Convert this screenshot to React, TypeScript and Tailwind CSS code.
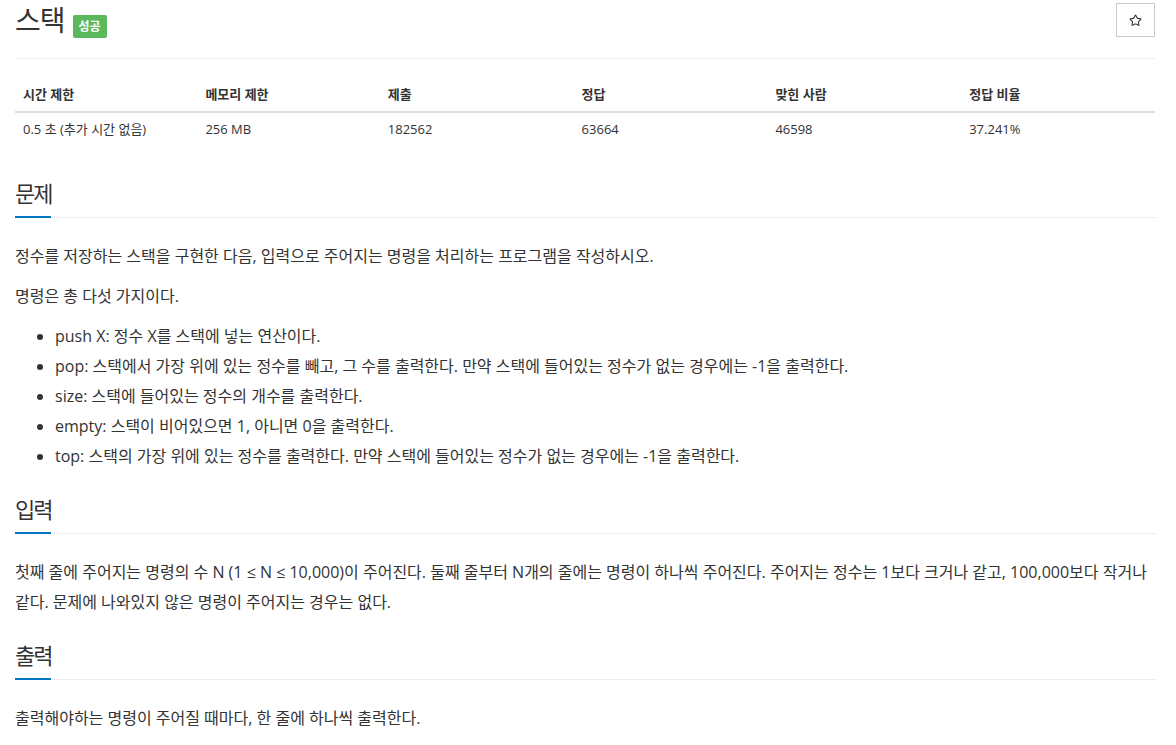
import { Star } from 'lucide-react';

const stats = [
  { label: '시간 제한', value: '0.5 초 (추가 시간 없음)', width: 'w-[16%]' },
  { label: '메모리 제한', value: '256 MB', width: 'w-[16%]' },
  { label: '제출', value: '182562', width: 'w-[17%]' },
  { label: '정답', value: '63664', width: 'w-[17%]' },
  { label: '맞힌 사람', value: '46598', width: 'w-[17%]' },
  { label: '정답 비율', value: '37.241%', width: 'w-[17%]' }
];

const commands = [
  'push X: 정수 X를 스택에 넣는 연산이다.',
  'pop: 스택에서 가장 위에 있는 정수를 빼고, 그 수를 출력한다. 만약 스택에 들어있는 정수가 없는 경우에는 -1을 출력한다.',
  'size: 스택에 들어있는 정수의 개수를 출력한다.',
  'empty: 스택이 비어있으면 1, 아니면 0을 출력한다.',
  'top: 스택의 가장 위에 있는 정수를 출력한다. 만약 스택에 들어있는 정수가 없는 경우에는 -1을 출력한다.'
];

function Headline({ title }: { title: string }) {
  return (
    <div className="mt-[26px] border-b border-dotted border-[#dddddd]">
      <h2 className="inline-block -mb-px border-b-2 border-[#0076c0] pb-[11px] text-[22px] font-normal leading-[24px] tracking-[-2px] text-[#333333]">
        {title}
      </h2>
    </div>
  );
}

export default function App() {
  return (
    <div className="min-h-screen bg-white font-['Open_Sans','Noto_Sans_CJK_KR',sans-serif] text-[#333333]">
      <div className="max-w-[1170px] px-[15px]">
        {/* Title */}
        <div className="mt-[3px] flex items-start justify-between">
          <div className="flex items-start">
            <h1 className="text-[28px] font-normal leading-[34px] tracking-[-1px] text-[#333333]">스택</h1>
            <span className="ml-[8px] mt-[12px] flex h-[23px] items-center rounded-[2px] bg-[#5cb85c] px-[6px] text-[12px] font-bold text-white">
              성공
            </span>
          </div>
          <button className="flex h-[34px] w-[39px] items-center justify-center border border-[#cccccc] bg-white">
            <Star className="h-[13px] w-[13px] text-[#333333]" strokeWidth={2} />
          </button>
        </div>
        <hr className="mt-[20px] border-0 border-t border-[#eeeeee]" />

        {/* Stats table */}
        <table className="mt-[17px] w-full border-collapse text-[13px]">
          <thead>
            <tr>
              {stats.map((s) => (
                <th
                  key={s.label}
                  className={`${s.width} border-b-2 border-[#dddddd] px-[8px] pt-[8px] pb-[7px] text-left font-bold leading-[20px]`}
                >
                  {s.label}
                </th>
              ))}
            </tr>
          </thead>
          <tbody>
            <tr>
              {stats.map((s) => (
                <td key={s.label} className="px-[8px] pt-[6px] pb-[8px] leading-[20px]">
                  {s.value}
                </td>
              ))}
            </tr>
          </tbody>
        </table>

        {/* 문제 */}
        <div className="mt-[34px]">
          <Headline title="문제" />
          <div className="mt-[23px] text-[16px] leading-[30px]">
            <p className="mb-[10px]">
              정수를 저장하는 스택을 구현한 다음, 입력으로 주어지는 명령을 처리하는 프로그램을 작성하시오.
            </p>
            <p className="mb-[10px]">명령은 총 다섯 가지이다.</p>
            <ul className="mb-[10px] list-disc pl-[40px]">
              {commands.map((c) => (
                <li key={c}>{c}</li>
              ))}
            </ul>
          </div>
        </div>

        {/* 입력 */}
        <Headline title="입력" />
        <div className="mt-[23px] text-[16px] leading-[30px]">
          <p className="mb-[10px]">
            첫째 줄에 주어지는 명령의 수 N (1 ≤ N ≤ 10,000)이 주어진다. 둘째 줄부터 N개의 줄에는 명령이 하나씩 주어진다. 주어지는 정수는 1보다 크거나 같고, 100,000보다 작거나 같다. 문제에 나와있지 않은 명령이 주어지는 경우는 없다.
          </p>
        </div>

        {/* 출력 */}
        <Headline title="출력" />
        <div className="mt-[23px] text-[16px] leading-[30px]">
          <p className="mb-[10px]">출력해야하는 명령이 주어질 때마다, 한 줄에 하나씩 출력한다.</p>
        </div>
      </div>
    </div>
  );
}
